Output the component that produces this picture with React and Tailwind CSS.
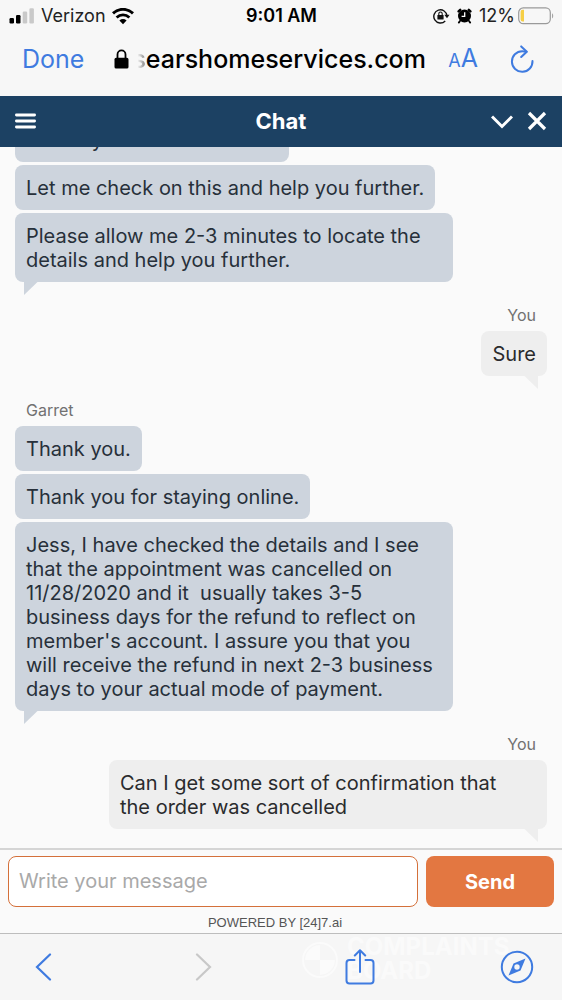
import React from "react";

function Signal() {
  return (
    <svg width="26" height="16" viewBox="0 0 26 16" aria-hidden="true">
      <rect x="0.5" y="10" width="4.5" height="5.5" rx="1.2" fill="#000" />
      <rect x="7" y="7" width="4.5" height="8.5" rx="1.2" fill="#000" />
      <rect x="13.7" y="3.5" width="4.5" height="12" rx="1.2" fill="#c9c9c9" />
      <rect x="20.4" y="0.3" width="4.5" height="15.2" rx="1.2" fill="#c9c9c9" />
    </svg>
  );
}

function Wifi() {
  return (
    <svg width="22" height="17" viewBox="0 0 22 17" fill="none" aria-hidden="true">
      <path d="M1 5.4C6.800 0 15.200 0 21 5.400" stroke="#000" strokeWidth="3" />
      <path d="M4.600 9.600C8.400 6 13.600 6 17.400 9.600" stroke="#000" strokeWidth="2.800" />
      <path d="M7.400 12.400C9.500 10.600 12.500 10.600 14.600 12.400L11 16.200Z" fill="#000" />
    </svg>
  );
}

function RotationLock() {
  return (
    <svg width="17" height="16" viewBox="0 0 17 16" fill="none" aria-hidden="true">
      <path d="M12.2 13A6.6 6.6 0 1 1 14 8" stroke="#111" strokeWidth="1.4" />
      <path d="M11.3 6.8h5.2L14 10.2Z" fill="#111" />
      <rect x="4.4" y="6.9" width="6.2" height="4.7" rx="0.7" fill="#111" />
      <path d="M5.8 7V5.7a1.7 1.7 0 0 1 3.4 0V7" stroke="#111" strokeWidth="1.1" />
    </svg>
  );
}

function Alarm() {
  return (
    <svg width="15" height="16" viewBox="0 0 15 16" fill="none" aria-hidden="true">
      <circle cx="7.5" cy="8" r="6.5" fill="#000" />
      <path d="M1.600 3.400 3.200 1.800M13.400 3.400 11.800 1.800" stroke="#000" strokeWidth="2.400" strokeLinecap="round" />
      <path d="M3 13 1.8 14.6M12 13l1.2 1.6" stroke="#000" strokeWidth="1.8" strokeLinecap="round" />
      <path d="M7.7 4.2V8.4H4.6" stroke="#fff" strokeWidth="1.3" />
    </svg>
  );
}

function Battery() {
  return (
    <svg width="36" height="18" viewBox="0 0 36 18" fill="none" aria-hidden="true">
      <rect x="0.7" y="0.9" width="31.6" height="15.8" rx="4.6" stroke="#9a9a9a" strokeWidth="1.2" />
      <path d="M4.6 2.8H6V14.6H4.6A2 2 0 0 1 2.6 12.6V4.8A2 2 0 0 1 4.6 2.8Z" fill="#f6cf45" />
      <path d="M34 6.2C35.6 7 35.6 10.6 34 11.4Z" fill="#a5a5a5" />
    </svg>
  );
}

function Lock() {
  return (
    <svg className="shrink-0" width="15" height="20" viewBox="0 0 15 20" fill="none" aria-hidden="true">
      <rect x="0.5" y="8.8" width="14" height="10.7" rx="1.6" fill="#000" />
      <path d="M3.5 9.5V5.4a4 4 0 0 1 8 0V9.5" stroke="#000" strokeWidth="1.8" />
    </svg>
  );
}

function Tail({ side }) {
  return side === "left" ? (
    <svg className="absolute top-full left-2" width="16" height="13" viewBox="0 0 16 13" aria-hidden="true">
      <path d="M1 0H14.5L1 13Z" fill="#cdd4dd" />
    </svg>
  ) : (
    <svg className="absolute top-full right-2" width="16" height="13" viewBox="0 0 16 13" aria-hidden="true">
      <path d="M15 0H1.5L15 13Z" fill="#eeeeee" />
    </svg>
  );
}

function AgentGroup({ name, messages }) {
  return (
    <section className="flex flex-col items-start">
      {name && <p className="mx-[11px] mb-1 text-base leading-6 text-[#717171]">{name}</p>}
      <div className="flex max-w-[438px] flex-col items-start gap-[3px]">
        {messages.map((text, i) => (
          <p key={i} className="relative rounded-lg bg-[#cdd4dd] px-[11px] pt-[11px] pb-[10px] whitespace-pre-wrap">
            {text}
            {i === messages.length - 1 && <Tail side="left" />}
          </p>
        ))}
      </div>
    </section>
  );
}

function UserGroup({ text }) {
  return (
    <section className="flex flex-col items-end pb-px">
      <p className="mx-[11px] mb-1 text-base leading-6 text-[#717171]">You</p>
      <p className="relative max-w-[438px] rounded-lg bg-[#eeeeee] px-[11px] pt-[11px] pb-[10px] text-[#2a2b2d]">
        {text}
        <Tail side="right" />
      </p>
    </section>
  );
}

function Watermark() {
  return (
    <div aria-hidden="true" className="pointer-events-none absolute top-0 left-[301px] flex items-center gap-2 text-white/50">
      <svg width="38" height="50" viewBox="0 0 38 50" fill="none">
        <circle cx="19" cy="26" r="17" stroke="currentColor" strokeWidth="2" />
        <path d="M19 26V11A15 15 0 0 0 4 26ZM19 26V41A15 15 0 0 0 34 26Z" fill="currentColor" />
      </svg>
      <div className="text-2xl leading-6 font-bold">
        COMPLAINTS
        <br />
        BOARD
      </div>
    </div>
  );
}

export default function App() {
  return (
    <div className="flex h-screen flex-col overflow-hidden bg-[#fafafa] font-['Inter',sans-serif]">
      <header className="shrink-0 bg-[#f7f7f7] text-black">
        <div className="grid h-8 grid-cols-[1fr_auto_1fr] items-center pr-2 pl-[9px] text-lg leading-8">
          <div className="flex items-center gap-[6px]">
            <Signal />
            <span className="text-[#222]">Verizon</span>
            <Wifi />
          </div>
          <div className="font-semibold">9:01 AM</div>
          <div className="flex items-center justify-end gap-[7px]">
            <RotationLock />
            <Alarm />
            <div className="flex items-center gap-[3px]">
              <span className="text-[#222]">12%</span>
              <Battery />
            </div>
          </div>
        </div>
        <div className="flex h-16 items-center pr-7 pb-[10px] pl-[22px]">
          <button className="text-[25px] leading-8 text-[#3f7be0]">Done</button>
          <div className="ml-[30px] flex min-w-0 flex-1 items-center gap-[3px]">
            <Lock />
            <span className="text-[25px] leading-8 font-medium whitespace-nowrap">
              <span className="bg-linear-to-r from-transparent from-40% to-[#777] bg-clip-text text-transparent">s</span>
              earshomeservices.com
            </span>
          </div>
          <button aria-label="Text size" className="mr-8 flex items-baseline text-[#3f7be0]">
            <span className="text-lg leading-8">A</span>
            <span className="text-[25px] leading-8">A</span>
          </button>
          <button aria-label="Reload">
            <svg width="24" height="28" viewBox="0 0 24 28" fill="none" stroke="#3f7be0" strokeWidth="2" strokeLinecap="round" strokeLinejoin="round">
              <path d="M22.500 16A10.300 10.300 0 1 1 12.200 6.200c1.600 0 2.800.1 4.200.5" />
              <path d="M11.200 1.400 16.800 6.700 11.200 12" />
            </svg>
          </button>
        </div>
      </header>

      <div className="grid h-[51px] shrink-0 grid-cols-[1fr_auto_1fr] items-center bg-[#1c4163] px-[15px] pb-px text-white">
        <button aria-label="Menu" className="justify-self-start">
          <svg width="21" height="16" viewBox="0 0 21 16" fill="none" stroke="#fff" strokeWidth="2.8" strokeLinecap="round">
            <path d="M1.4 2H19.600M1.400 8H19.600M1.400 14H19.600" />
          </svg>
        </button>
        <h1 className="text-[22px] leading-8 font-bold">Chat</h1>
        <div className="flex items-center justify-end gap-[14px]">
          <button aria-label="Minimize">
            <svg width="22" height="20" viewBox="0 0 22 20" fill="none" stroke="#fff" strokeWidth="3">
              <path d="M1 5.5 11 15.5 21 5.5" />
            </svg>
          </button>
          <button aria-label="Close">
            <svg width="20" height="20" viewBox="0 0 20 20" fill="none" stroke="#fff" strokeWidth="3.2">
              <path d="M2 2 18 18M18 2 2 18" />
            </svg>
          </button>
        </div>
      </div>

      <main className="flex min-h-0 flex-1 flex-col justify-end gap-[21px] overflow-hidden px-[15px] pb-[18px] text-xl leading-6 text-[#27303a]">
        <AgentGroup
          messages={[
            "I can try to find the details.",
            "Let me check on this and help you further.",
            "Please allow me 2-3 minutes to locate the details and help you further.",
          ]}
        />
        <UserGroup text="Sure" />
        <AgentGroup
          name="Garret"
          messages={[
            "Thank you.",
            "Thank you for staying online.",
            "Jess, I have checked the details and I see that the appointment was cancelled on 11/28/2020 and it  usually takes 3-5 business days for the refund to reflect on member's account. I assure you that you will receive the refund in next 2-3 business days to your actual mode of payment.",
          ]}
        />
        <UserGroup text={"Can I get some sort of confirmation that the\u00a0order was cancelled"} />
      </main>

      <form className="shrink-0 border-t-2 border-[#d5d5d5] px-2 pt-[6px]" onSubmit={(e) => e.preventDefault()}>
        <div className="flex h-[51px] gap-2">
          <input
            aria-label="Write your message"
            placeholder="Write your message"
            className="min-w-0 flex-1 rounded-lg border border-[#d4703a] bg-white px-[10px] pb-[2px] text-xl outline-none placeholder:text-[#a9a9a9]"
          />
          <button className="w-32 rounded-lg bg-[#e37741] text-xl font-bold text-white">Send</button>
        </div>
        <p className="h-[26px] pt-2 pr-3 text-center font-['Liberation_Sans',sans-serif] text-[13px] leading-4 text-[#555]">POWERED BY [24]7.ai</p>
      </form>

      <nav className="relative flex h-[67px] shrink-0 items-center justify-between border-t border-[#bdbdbd] bg-[#f6f6f6] px-7">
        <Watermark />
        <button aria-label="Back" className="relative">
          <svg width="34" height="28" viewBox="0 0 34 28" fill="none" stroke="#3f7be0" strokeWidth="2.2" strokeLinecap="round">
            <path d="M22 1.500 9 14 22 26.500" />
          </svg>
        </button>
        <button aria-label="Forward" className="relative">
          <svg width="34" height="28" viewBox="0 0 34 28" fill="none" stroke="#c8c8c8" strokeWidth="2.2" strokeLinecap="round">
            <path d="M12 1.500 25 14 12 26.500" />
          </svg>
        </button>
        <button aria-label="Share" className="relative">
          <svg width="34" height="36" viewBox="0 0 34 36" fill="none" stroke="#3f7be0" strokeWidth="2" strokeLinecap="round" strokeLinejoin="round">
            <path d="M11.500 11H6.500A3 3 0 0 0 3.500 14V31.500A3 3 0 0 0 6.500 34.500H27.500A3 3 0 0 0 30.500 31.500V14A3 3 0 0 0 27.500 11H22.500" />
            <path d="M17 23V1.500M11.800 6.500 17 1.200 22.200 6.500" />
          </svg>
        </button>
        <button aria-label="Browser" className="relative">
          <svg width="34" height="34" viewBox="0 0 34 34" fill="none">
            <circle cx="17" cy="17" r="15.200" stroke="#3f7be0" strokeWidth="2" />
            <path fillRule="evenodd" d="M25.500 8.500 20.500 20.500 8.500 25.500 13.500 13.500ZM17 14.300a2.700 2.700 0 1 0 0 5.400 2.700 2.700 0 0 0 0-5.400Z" fill="#3f7be0" />
          </svg>
        </button>
      </nav>
    </div>
  );
}
